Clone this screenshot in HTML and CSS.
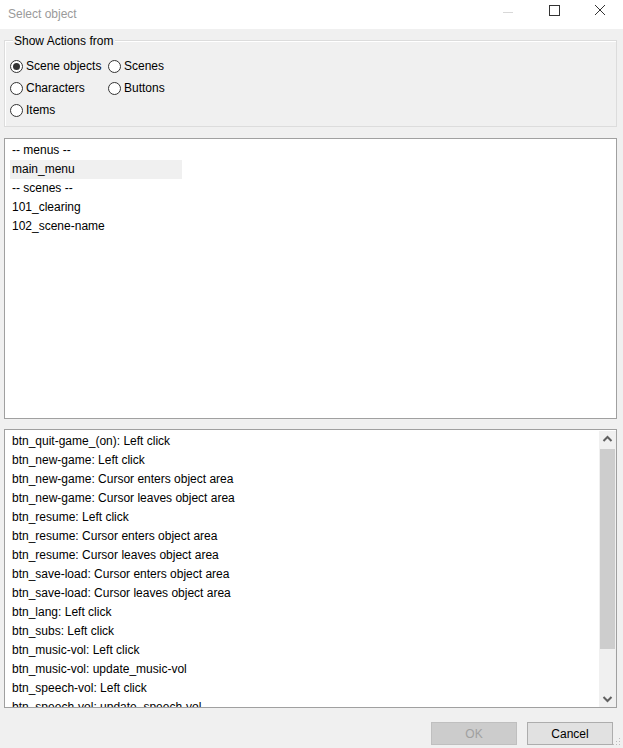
FILE: index.html
```html
<!DOCTYPE html>
<html>
<head>
<meta charset="utf-8">
<link rel="stylesheet" href="styles.css">
</head>
<body>
<div class="window">
  <div class="titlebar">
    <span class="title">Select object</span>
    <div class="controls">
      <svg class="ctl" width="46" height="29" viewBox="0 0 46 29"><line x1="18" y1="14.5" x2="28" y2="14.5" stroke="#d8d8d8" stroke-width="1"/></svg>
      <svg class="ctl" width="46" height="29" viewBox="0 0 46 29"><rect x="18.5" y="7.5" width="10" height="10" fill="none" stroke="#333" stroke-width="1"/></svg>
      <svg class="ctl" width="46" height="29" viewBox="0 0 46 29"><path d="M18 7 L28 17 M28 7 L18 17" stroke="#333" stroke-width="1"/></svg>
    </div>
  </div>
  <div class="body">
    <div class="group">
      <div class="group-title">Show Actions from</div>
      <div class="radios">
        <label class="radio"><span class="circle checked"></span>Scene objects</label>
        <label class="radio"><span class="circle"></span>Scenes</label>
        <label class="radio"><span class="circle"></span>Characters</label>
        <label class="radio"><span class="circle"></span>Buttons</label>
        <label class="radio"><span class="circle"></span>Items</label>
      </div>
    </div>
    <div class="list list-top">
      <div class="row">-- menus --</div>
      <div class="row selected">main_menu</div>
      <div class="row">-- scenes --</div>
      <div class="row">101_clearing</div>
      <div class="row">102_scene-name</div>
    </div>
    <div class="list list-bottom">
      <div class="items">
        <div class="row">btn_quit-game_(on): Left click</div>
        <div class="row">btn_new-game: Left click</div>
        <div class="row">btn_new-game: Cursor enters object area</div>
        <div class="row">btn_new-game: Cursor leaves object area</div>
        <div class="row">btn_resume: Left click</div>
        <div class="row">btn_resume: Cursor enters object area</div>
        <div class="row">btn_resume: Cursor leaves object area</div>
        <div class="row">btn_save-load: Cursor enters object area</div>
        <div class="row">btn_save-load: Cursor leaves object area</div>
        <div class="row">btn_lang: Left click</div>
        <div class="row">btn_subs: Left click</div>
        <div class="row">btn_music-vol: Left click</div>
        <div class="row">btn_music-vol: update_music-vol</div>
        <div class="row">btn_speech-vol: Left click</div>
        <div class="row">btn_speech-vol: update_speech-vol</div>
      </div>
      <div class="scrollbar">
        <div class="arrow"><svg width="17" height="17" viewBox="0 0 17 17"><path d="M4.5 10 L8.5 6 L12.5 10" fill="none" stroke="#606060" stroke-width="2"/></svg></div>
        <div class="track"><div class="thumb"></div></div>
        <div class="arrow"><svg width="17" height="17" viewBox="0 0 17 17"><path d="M4.5 7 L8.5 11 L12.5 7" fill="none" stroke="#606060" stroke-width="2"/></svg></div>
      </div>
    </div>
    <div class="buttons">
      <button class="btn disabled">OK</button>
      <button class="btn">Cancel</button>
    </div>
  </div>
  <svg class="grip" width="8" height="8" viewBox="0 0 8 8"><rect x="6" y="0" width="1" height="1" fill="#bcbcbc"/><rect x="3" y="3" width="1" height="1" fill="#bcbcbc"/><rect x="6" y="3" width="1" height="1" fill="#bcbcbc"/><rect x="0" y="6" width="1" height="1" fill="#bcbcbc"/><rect x="3" y="6" width="1" height="1" fill="#bcbcbc"/><rect x="6" y="6" width="1" height="1" fill="#bcbcbc"/></svg>
</div>
</body>
</html>
```
FILE: styles.css
```css
* { box-sizing: border-box; }
html, body { margin: 0; padding: 0; }
body {
  width: 623px;
  height: 748px;
  overflow: hidden;
  background: #f0f0f0;
  font-family: "Liberation Sans", Arial, sans-serif;
  font-size: 12px;
  color: #000;
}
.window {
  position: relative;
  width: 623px;
  height: 748px;
  display: flex;
  flex-direction: column;
}
.titlebar {
  height: 29px;
  background: #fff;
  display: flex;
  align-items: center;
  justify-content: space-between;
  flex-shrink: 0;
}
.title {
  color: #9a9a9a;
  margin-left: 8px;
  margin-top: -1px;
}
.controls { display: flex; margin-top: -4px; }
.ctl { display: block; }
.body {
  padding: 0 6px 0 4px;
  display: flex;
  flex-direction: column;
}
.group {
  margin-top: 11px;
  height: 87px;
  border: 1px solid #dcdcdc;
  box-shadow: inset 1px 1px 0 #fff;
  padding: 0 0 0 5px;
}
.group-title {
  width: fit-content;
  margin-top: -7px;
  margin-left: 3px;
  padding: 0 2px 0 1px;
  background: #f0f0f0;
  line-height: 15px;
}
.radios {
  display: grid;
  grid-template-columns: 98px auto;
  grid-auto-rows: 22px;
  margin-top: 6px;
}
.radio {
  display: flex;
  align-items: center;
  height: 22px;
}
.circle {
  width: 13px;
  height: 13px;
  border: 1px solid #333;
  border-radius: 50%;
  background: #fff;
  margin-right: 3px;
  display: flex;
  align-items: center;
  justify-content: center;
  flex-shrink: 0;
}
.circle.checked::after {
  content: "";
  width: 7px;
  height: 7px;
  border-radius: 50%;
  background: #333;
}
.list {
  background: #fff;
  border: 1px solid #a0a0a0;
}
.list-top {
  margin-top: 11px;
  height: 281px;
  padding: 2px 0 0 5px;
}
.row {
  height: 19px;
  line-height: 19px;
  padding-left: 2px;
  white-space: nowrap;
}
.row.selected {
  width: 172px;
  background: #f0f0f0;
}
.list-bottom {
  margin-top: 10px;
  height: 279px;
  display: flex;
  overflow: hidden;
}
.items {
  flex: 1;
  padding: 2px 0 0 5px;
  overflow: hidden;
}
.scrollbar {
  width: 17px;
  margin: 1px 0 0 0;
  display: flex;
  flex-direction: column;
  background: #f0f0f0;
}
.arrow { height: 17px; flex-shrink: 0; }
.arrow svg { display: block; }
.track { flex: 1; padding: 1px 1px 0 1px; }
.thumb {
  height: 200px;
  background: #cdcdcd;
}
.buttons {
  display: flex;
  justify-content: flex-end;
  gap: 10px;
  margin-top: 14px;
  padding-right: 4px;
}
.btn {
  width: 86px;
  height: 23px;
  font-family: "Liberation Sans", Arial, sans-serif;
  font-size: 12px;
  background: #e1e1e1;
  border: 1px solid #adadad;
  color: #000;
  padding: 0;
}
.btn.disabled {
  background: #cccccc;
  border-color: #bfbfbf;
  color: #a0a0a0;
}
.grip {
  position: absolute;
  right: 2px;
  bottom: 2px;
}
```
